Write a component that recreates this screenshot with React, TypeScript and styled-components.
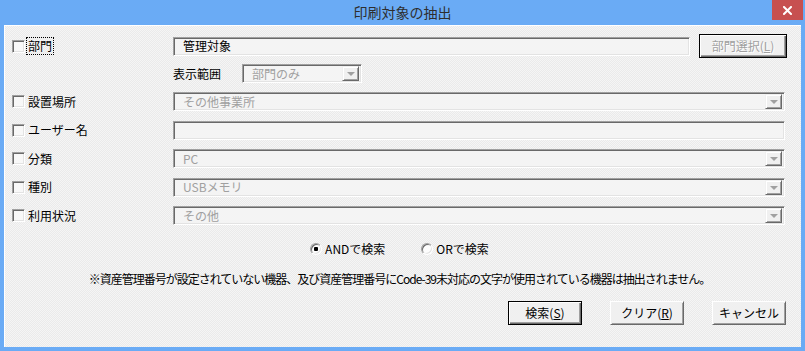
import React from "react";
import styled, { createGlobalStyle, css } from "styled-components";

const GlobalStyle = createGlobalStyle`
  html, body { margin: 0; padding: 0; width: 805px; height: 351px; overflow: hidden; }
  body {
    font-family: "MS UI Gothic", "Noto Sans CJK JP", sans-serif;
    font-size: 12px;
    color: #000;
  }
  * { box-sizing: border-box; }
`;

const Window = styled.div`
  width: 805px;
  height: 351px;
  display: flex;
  flex-direction: column;
  background: #6aabf5;
`;

const TitleBar = styled.div`
  height: 25px;
  flex: none;
  display: grid;
  grid-template-columns: 1fr auto 1fr;
  align-items: start;
`;

const Title = styled.div`
  grid-column: 2;
  font-family: "Noto Sans CJK JP", sans-serif;
  font-size: 14px;
  line-height: 25px;
  color: #2e2e2e;
`;

const CloseButton = styled.div`
  grid-column: 3;
  justify-self: end;
  width: 31px;
  height: 20px;
  margin-right: 2px;
  background: #c75050;
  display: flex;
  align-items: center;
  justify-content: center;
`;

const Frame = styled.div`
  flex: 1;
  display: flex;
  padding: 0 4px 4px 4px;
`;

const Panel = styled.div`
  flex: 1;
  display: flex;
  flex-direction: column;
  border-top: 1px solid #ffffff;
  border-left: 1px solid #ffffff;
  padding: 8px 14px 0 7px;
  background-color: #f0f0f0;
  background-image: repeating-conic-gradient(#f5f5f5 0% 25%, #eaeaea 0% 50%);
  background-size: 2px 2px;
`;

const TopRow = styled.div`
  display: flex;
  align-items: center;
  height: 24px;
`;

const ScopeRow = styled.div`
  display: flex;
  align-items: center;
  height: 19px;
  margin-top: 6px;
  padding-left: 161px;
`;

const ScopeLabel = styled.span`
  width: 69px;
  line-height: 14px;
`;

const FieldList = styled.div`
  display: flex;
  flex-direction: column;
  gap: 9.5px;
  margin-top: 9px;
`;

const FieldRow = styled.div`
  display: flex;
  align-items: center;
  height: 19px;
`;

const LabelCell = styled.div`
  width: 161px;
  flex: none;
  display: flex;
  align-items: center;
  gap: 3px;
`;

const CheckBox = styled.span`
  width: 13px;
  height: 13px;
  flex: none;
  border: 1px solid;
  border-color: #a0a0a0 #ffffff #ffffff #a0a0a0;
  box-shadow: inset 1px 1px 0 #696969, inset -1px -1px 0 #e3e3e3;
  background: #f8f8f8;
`;

const LabelText = styled.span<{ $focused?: boolean }>`
  line-height: 14px;
  white-space: nowrap;
  ${(p) =>
    p.$focused &&
    css`
      outline: 1px dotted #000;
      outline-offset: 1px;
    `}
`;

const sunken = css`
  border: 1px solid;
  border-color: #a0a0a0 #ffffff #ffffff #a0a0a0;
  box-shadow: inset 1px 1px 0 #696969, inset -1px -1px 0 #e3e3e3;
  background: #f4f4f4;
`;

const Field = styled.div<{ $width: number; $disabled?: boolean }>`
  ${sunken};
  width: ${(p) => p.$width}px;
  height: 19px;
  flex: none;
  display: flex;
  align-items: center;
  padding: 0 2px 0 9px;
  color: ${(p) => (p.$disabled ? "#a0a0a0" : "#000")};
  line-height: 14px;
  white-space: nowrap;
`;

const FieldText = styled.span`
  flex: 1;
`;

const DropButton = styled.span`
  width: 17px;
  height: 15px;
  flex: none;
  border: 1px solid;
  border-color: #f0f0f0 #696969 #696969 #f0f0f0;
  box-shadow: inset 1px 1px 0 #ffffff, inset -1px -1px 0 #a0a0a0;
  background: #f0f0f0;
  display: flex;
  align-items: center;
  justify-content: center;
`;

const Arrow = styled.span`
  width: 0;
  height: 0;
  border-left: 4px solid transparent;
  border-right: 4px solid transparent;
  border-top: 4px solid #a0a0a0;
  margin-top: 1px;
`;

const Button = styled.button<{ $default?: boolean; $disabled?: boolean; $width: number }>`
  width: ${(p) => p.$width}px;
  height: 24px;
  flex: none;
  padding: 0;
  font: inherit;
  font-size: 12px;
  line-height: 14px;
  color: ${(p) => (p.$disabled ? "#a0a0a0" : "#000")};
  text-shadow: ${(p) => (p.$disabled ? "1px 1px 0 #ffffff" : "none")};
  background: #f0f0f0;
  border: 1px solid;
  border-color: ${(p) => (p.$default ? "#000 #000 #000 #000" : "#ffffff #696969 #696969 #ffffff")};
  box-shadow: ${(p) =>
    p.$default
      ? "inset 1px 1px 0 #ffffff, inset -1px -1px 0 #696969, inset -2px -2px 0 #a0a0a0"
      : "inset 1px 1px 0 #f0f0f0, inset -1px -1px 0 #a0a0a0"};
  cursor: default;
`;

const Mnemonic = styled.u`
  text-decoration: underline;
  text-underline-offset: 1px;
`;

const RadioRow = styled.div`
  display: flex;
  justify-content: center;
  align-items: center;
  gap: 36px;
  height: 14px;
  margin-top: 17px;
`;

const RadioItem = styled.label`
  display: flex;
  align-items: center;
  gap: 3px;
  line-height: 14px;
`;

const Radio = styled.span<{ $checked?: boolean }>`
  width: 12px;
  height: 12px;
  flex: none;
  border-radius: 50%;
  border: 1px solid;
  border-color: #a0a0a0 #ffffff #ffffff #a0a0a0;
  box-shadow: inset 1px 1px 0 #696969, inset -1px -1px 0 #e3e3e3;
  background: ${(p) =>
    p.$checked ? "radial-gradient(circle, #000 0 2px, #fdfdfd 2.5px)" : "#fdfdfd"};
`;

const Note = styled.div`
  margin-top: 16px;
  height: 14px;
  line-height: 14px;
  text-align: center;
  letter-spacing: -1px;
  white-space: nowrap;
`;

const ButtonRow = styled.div`
  display: flex;
  justify-content: flex-end;
  gap: 28px;
  margin-top: 15px;
  padding-right: 1px;
`;

type RowDef = { label: string; value: string; combo: boolean };

const rows: RowDef[] = [
  { label: "設置場所", value: "その他事業所", combo: true },
  { label: "ユーザー名", value: "", combo: false },
  { label: "分類", value: "PC", combo: true },
  { label: "種別", value: "USBメモリ", combo: true },
  { label: "利用状況", value: "その他", combo: true },
];

const Combo: React.FC<{ width: number; value: string }> = ({ width, value }) => (
  <Field $width={width} $disabled>
    <FieldText>{value}</FieldText>
    <DropButton>
      <Arrow />
    </DropButton>
  </Field>
);

export default function App() {
  return (
    <>
      <GlobalStyle />
      <Window>
        <TitleBar>
          <Title>印刷対象の抽出</Title>
          <CloseButton>
            <svg width="9" height="9" viewBox="0 0 9 9">
              <path d="M1 1 L8 8 M8 1 L1 8" stroke="#fff" strokeWidth="2" strokeLinecap="square" />
            </svg>
          </CloseButton>
        </TitleBar>
        <Frame>
          <Panel>
            <TopRow>
              <LabelCell>
                <CheckBox />
                <LabelText $focused>部門</LabelText>
              </LabelCell>
              <Field $width={517}>
                <FieldText>管理対象</FieldText>
              </Field>
              <Button $width={88} $default $disabled style={{ marginLeft: 9 }}>
                部門選択(<Mnemonic>L</Mnemonic>)
              </Button>
            </TopRow>
            <ScopeRow>
              <ScopeLabel>表示範囲</ScopeLabel>
              <Combo width={120} value="部門のみ" />
            </ScopeRow>
            <FieldList>
              {rows.map((r) => (
                <FieldRow key={r.label}>
                  <LabelCell>
                    <CheckBox />
                    <LabelText>{r.label}</LabelText>
                  </LabelCell>
                  {r.combo ? (
                    <Combo width={612} value={r.value} />
                  ) : (
                    <Field $width={612} $disabled>
                      <FieldText>{r.value}</FieldText>
                    </Field>
                  )}
                </FieldRow>
              ))}
            </FieldList>
            <RadioRow>
              <RadioItem>
                <Radio $checked />
                ANDで検索
              </RadioItem>
              <RadioItem>
                <Radio />
                ORで検索
              </RadioItem>
            </RadioRow>
            <Note>
              ※資産管理番号が設定されていない機器、及び資産管理番号にCode-39未対応の文字が使用されている機器は抽出されません。
            </Note>
            <ButtonRow>
              <Button $width={74} $default>
                検索(<Mnemonic>S</Mnemonic>)
              </Button>
              <Button $width={74}>
                クリア(<Mnemonic>R</Mnemonic>)
              </Button>
              <Button $width={74}>キャンセル</Button>
            </ButtonRow>
          </Panel>
        </Frame>
      </Window>
    </>
  );
}
